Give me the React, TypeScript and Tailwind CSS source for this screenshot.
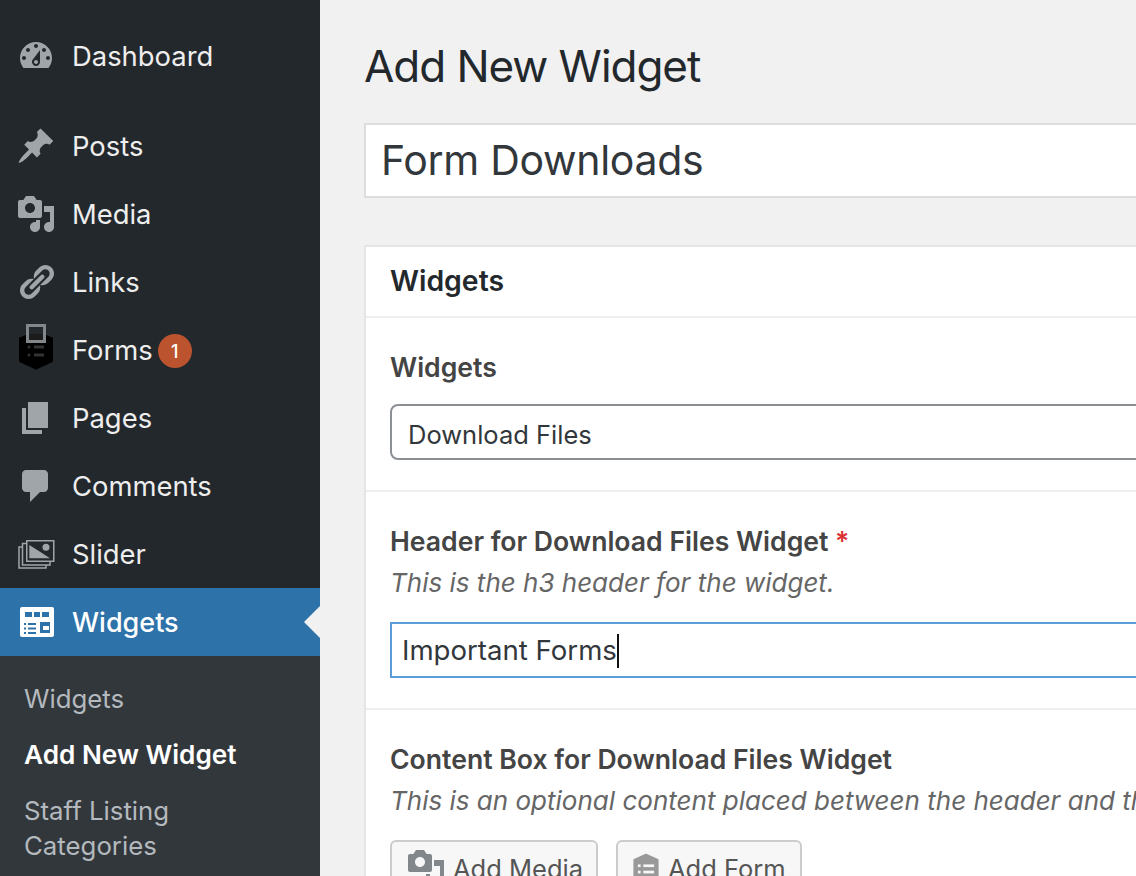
import React from 'react';

const paths = {
  dashboard:
    'M3.76 16h12.48c1.1-1.37 1.76-3.11 1.76-5 0-4.42-3.58-8-8-8s-8 3.58-8 8c0 1.89.66 3.63 1.76 5zM10 4c.55 0 1 .45 1 1s-.45 1-1 1-1-.45-1-1 .45-1 1-1zM6 6c.55 0 1 .45 1 1s-.45 1-1 1-1-.45-1-1 .45-1 1-1zm8 0c.55 0 1 .45 1 1s-.45 1-1 1-1-.45-1-1 .45-1 1-1zm-5.37 5.55L12 7v6c0 1.1-.9 2-2 2s-2-.9-2-2c0-.57.24-1.08.63-1.45zM4 10c.55 0 1 .45 1 1s-.45 1-1 1-1-.45-1-1 .45-1 1-1zm12 0c.55 0 1 .45 1 1s-.45 1-1 1-1-.45-1-1 .45-1 1-1zm-5 3c0-.55-.45-1-1-1s-1 .45-1 1 .45 1 1 1 1-.45 1-1z',
  post: 'M10.44 3.02l1.82-1.82 6.36 6.35-1.83 1.82c-1.05-.68-2.48-.57-3.41.36l-.75.75c-.92.93-1.04 2.35-.35 3.41l-1.83 1.82-2.41-2.41-2.8 2.79c-.42.42-3.38 2.71-3.8 2.29s1.86-3.39 2.28-3.81l2.79-2.79L4.1 9.36l1.83-1.82c1.05.69 2.48.57 3.4-.36l.75-.75c.93-.92 1.05-2.35.36-3.41z',
  media:
    'M13 11V4c0-.55-.45-1-1-1h-1.67L9 1H5L3.67 3H2c-.55 0-1 .45-1 1v7c0 .55.45 1 1 1h10c.55 0 1-.45 1-1zM7 4.5c1.38 0 2.5 1.12 2.5 2.5S8.38 9.5 7 9.5 4.5 8.38 4.5 7 5.62 4.5 7 4.5zM14 6h5v10.5c0 1.38-1.12 2.5-2.5 2.5S14 17.88 14 16.5s1.12-2.5 2.5-2.5c.17 0 .34.02.5.05V9h-3V6zm-4 8.05V13h2v3.5c0 1.38-1.12 2.5-2.5 2.5S7 17.88 7 16.5 8.12 14 9.5 14c.17 0 .34.02.5.05z',
  links:
    'M17.74 2.76c1.68 1.69 1.68 4.41 0 6.1l-1.53 1.52c-1.12 1.12-2.7 1.47-4.14 1.09l2.62-2.61.76-.77.76-.76c.84-.84.84-2.2 0-3.04-.84-.85-2.2-.85-3.04 0l-.77.76-3.38 3.38c-.37-1.44-.02-3.02 1.1-4.14l1.52-1.53c1.69-1.68 4.42-1.68 6.1 0zM8.59 13.43l5.34-5.34c.42-.42.42-1.1 0-1.52-.44-.43-1.13-.39-1.53 0l-5.33 5.34c-.42.42-.42 1.1 0 1.52.44.43 1.13.39 1.52 0zm-.76 2.29l4.14-4.15c.38 1.44.03 3.02-1.09 4.14l-1.52 1.53c-1.69 1.68-4.41 1.68-6.1 0-1.68-1.68-1.68-4.42 0-6.1l1.53-1.52c1.12-1.12 2.7-1.47 4.14-1.1l-4.14 4.15c-.85.84-.85 2.2 0 3.05.84.84 2.2.84 3.04 0z',
  pages: 'M6 15V2h10v13H6zm-1 1h8v2H3V5h2v11z',
  comments:
    'M5 2h9c1.1 0 2 .9 2 2v7c0 1.1-.9 2-2 2h-2l-5 5v-5H5c-1.1 0-2-.9-2-2V4c0-1.1.9-2 2-2z',
};

const Dashicon = ({ d, className }: { d: string; className: string }) => (
  <svg viewBox="0 0 20 20" className={className} fill="currentColor" fillRule="evenodd">
    <path d={d} />
  </svg>
);

const FormsIcon = () => (
  <svg viewBox="0 0 40 50" className="w-10 h-[50px] shrink-0 mt-[-10px]">
    <path d="M20 12l16 6.5V41l-16 7.500-16-7.500V18.500z" fill="#000" stroke="#000" strokeWidth="2" strokeLinejoin="round" />
    <rect x="11.500" y="5.500" width="17" height="16" fill="#23282d" stroke="#82878c" strokeWidth="3" />
    <rect x="13" y="14" width="14" height="6" fill="#1c1c1c" />
    <circle cx="13" cy="27" r="1.500" fill="#333" />
    <circle cx="13" cy="35" r="1.500" fill="#333" />
    <rect x="18" y="25.500" width="10" height="3" fill="#333" />
    <rect x="18" y="33.500" width="10" height="3" fill="#333" />
  </svg>
);

const SliderIcon = () => (
  <svg viewBox="0 0 40 40" className="w-10 h-10 shrink-0">
    <g fill="none" stroke="#a0a5aa" strokeWidth="1.500">
      <path d="M6.500 13H3v21h27v-3" />
      <path d="M10.500 9.500H6.500V31H34v-4" />
      <rect x="10.750" y="6.750" width="27" height="20.500" />
    </g>
    <path d="M13.300 11l12.300 7.700 8.400 5.600H13.300z" fill="#a0a5aa" />
    <circle cx="30" cy="13.300" r="3.500" fill="#a0a5aa" />
  </svg>
);

const WidgetsIcon = () => (
  <svg viewBox="0 0 40 40" className="w-10 h-10 shrink-0">
    <rect x="4" y="5" width="34" height="30" rx="2" fill="#fff" />
    <g fill="#2e72aa">
      <rect x="9" y="10" width="7" height="5" />
      <rect x="18" y="10" width="6" height="5" />
      <rect x="26" y="10" width="7" height="5" />
      <rect x="8" y="21" width="2" height="2" />
      <rect x="8" y="25.500" width="2" height="2" />
      <rect x="8" y="30" width="2" height="2" />
      <rect x="12" y="21" width="8" height="2" />
      <rect x="12" y="25.500" width="8" height="2" />
      <rect x="12" y="30" width="8" height="2" />
      <rect x="24" y="20" width="10" height="11" />
    </g>
    <rect x="27" y="24" width="6" height="4" fill="#fff" />
  </svg>
);

const menu: { label: string; icon: React.ReactNode; badge?: string }[] = [
  { label: 'Posts', icon: <Dashicon d={paths.post} className="w-10 h-10 shrink-0 text-[#a0a5aa]" /> },
  { label: 'Media', icon: <Dashicon d={paths.media} className="w-10 h-10 shrink-0 text-[#a0a5aa]" /> },
  { label: 'Links', icon: <Dashicon d={paths.links} className="w-10 h-10 shrink-0 text-[#a0a5aa]" /> },
  { label: 'Forms', icon: <FormsIcon />, badge: '1' },
  { label: 'Pages', icon: <Dashicon d={paths.pages} className="w-10 h-10 shrink-0 text-[#a0a5aa]" /> },
  { label: 'Comments', icon: <Dashicon d={paths.comments} className="w-10 h-10 shrink-0 text-[#a0a5aa]" /> },
  { label: 'Slider', icon: <SliderIcon /> },
];

const MenuRow = ({ label, icon, badge }: { label: string; icon: React.ReactNode; badge?: string }) => (
  <div className="h-[68px] flex items-center pl-4">
    <div className="w-10 flex justify-center">{icon}</div>
    <span className="ml-[16px] pt-[2px] text-[27.4px] leading-none text-[#eee]">{label}</span>
    {badge && (
      <span className="ml-[5px] mt-[2px] w-[34px] h-[34px] rounded-full bg-[#bb532e] text-white text-[18px] font-medium flex items-center justify-center">
        {badge}
      </span>
    )}
  </div>
);

const Sidebar = () => (
  <aside className="w-[320px] shrink-0 bg-[#23282d] pt-[22px] h-full">
    <MenuRow label="Dashboard" icon={<Dashicon d={paths.dashboard} className="w-10 h-10 shrink-0 text-[#a0a5aa]" />} />
    <div className="h-[22px]" />
    {menu.map((item) => (
      <MenuRow key={item.label} {...item} />
    ))}
    <div className="relative h-[68px] bg-[#2e72aa] flex items-center pl-4">
      <WidgetsIcon />
      <span className="ml-[16px] text-[27px] leading-none text-white font-medium">Widgets</span>
      <span className="absolute right-0 top-[18px] border-y-[16px] border-r-[16px] border-y-transparent border-r-[#f1f1f1]" />
    </div>
    <div className="bg-[#32373c] h-[220px] pt-[25px] pl-6 text-[25.8px] leading-[35px] text-[#b4b9be]">
      <div>Widgets</div>
      <div className="mt-[21px] text-[26.2px] text-white font-semibold">Add New Widget</div>
      <div className="mt-[21px]">Staff Listing</div>
      <div>Categories</div>
    </div>
  </aside>
);

const App = () => {
  return (
    <div className="w-[1136px] h-[876px] overflow-hidden flex bg-[#f1f1f1] font-['Inter','Liberation_Sans',sans-serif]">
      <Sidebar />
      <main className="pl-[44px] pt-[38px] w-[1300px] shrink-0">
        <h1 className="text-[44px] leading-[56px] tracking-[-1.05px] text-[#23282d] font-normal">Add New Widget</h1>

        <div className="mt-[29px] h-[75px] bg-white border-2 border-[#ddd] pl-[15px] flex items-center text-[41px] tracking-[-0.3px] text-[#32373c]">
          Form Downloads
        </div>

        <section className="mt-[47px] bg-white border-2 border-[#e5e5e5]">
          <div className="h-[71px] pl-[24px] flex items-center border-b-2 border-[#eee] text-[28.4px] font-semibold text-[#23282d]">
            Widgets
          </div>

          <div className="h-[174px] pl-[24px] pt-[31px] border-b-2 border-[#eee]">
            <div className="text-[26.6px] leading-[36px] font-semibold text-[#444]">Widgets</div>
            <div className="mt-[19px] h-[56px] pl-[16px] pt-[7px] flex items-center border-2 border-[#8c8f94] rounded-lg text-[25.500px] text-[#32373c]">
              Download Files
            </div>
          </div>

          <div className="h-[218px] pl-[24px] pt-[31px] border-b-2 border-[#eee]">
            <div className="text-[26.6px] leading-[36px] font-semibold text-[#444]">
              Header for Download Files Widget <span className="text-[#dc3232]">*</span>
            </div>
            <p className="mt-[6px] text-[26px] leading-[36px] italic text-[#666]">This is the h3 header for the widget.</p>
            <div className="mt-[21px] h-[56px] pl-[10px] pt-[2px] flex items-center border-2 border-[#5b9dd9] text-[27.6px] text-[#32373c]">
              Important Forms
              <span className="w-[2px] h-[34px] bg-[#111]" />
            </div>
          </div>

          <div className="pl-[24px] pt-[31px] h-[300px]">
            <div className="text-[26.6px] leading-[36px] font-semibold text-[#444]">Content Box for Download Files Widget</div>
            <p className="mt-[6px] text-[26px] leading-[36px] italic text-[#666] whitespace-nowrap">
              This is an optional content placed between the header and the list of files.
            </p>
            <div className="mt-[21px] flex gap-[18px]">
              <div className="h-[56px] w-[208px] pl-[14px] pt-[2px] flex items-center gap-[7px] bg-[#f7f7f7] border-2 border-[#ccc] rounded-md text-[25.500px] text-[#555]">
                <Dashicon d={paths.media} className="w-10 h-10 shrink-0 -mt-[2px] text-[#82878c]" />
                Add Media
              </div>
              <div className="h-[56px] w-[186px] pl-[10px] pt-[2px] flex items-center gap-[4px] bg-[#f7f7f7] border-2 border-[#ccc] rounded-md text-[25.500px] text-[#555]">
                <svg viewBox="0 0 40 40" className="w-9 h-10 shrink-0 -mt-[2px]">
                  <path d="M20 5l13 6v19l-3 2-10 4-10-4-3-2V11z" fill="#999" stroke="#999" strokeWidth="2" strokeLinejoin="round" />
                  <g fill="#f7f7f7">
                    <rect x="11" y="16" width="3" height="3" />
                    <rect x="11" y="23" width="3" height="3" />
                    <rect x="17" y="16" width="12" height="3" />
                    <rect x="17" y="23" width="12" height="3" />
                  </g>
                </svg>
                Add Form
              </div>
            </div>
          </div>
        </section>
      </main>
    </div>
  );
};

export default App;
